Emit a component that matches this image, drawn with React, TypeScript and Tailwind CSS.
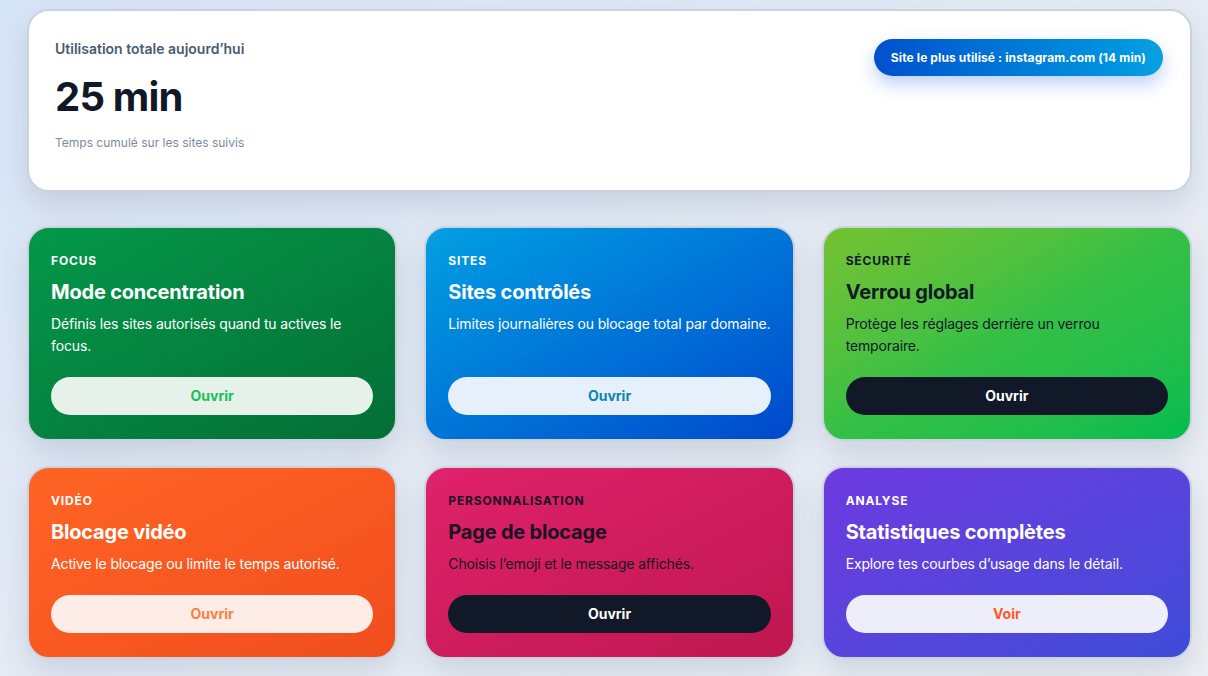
import React from "react";

type Card = {
  label: string;
  title: string;
  desc: string;
  btn: string;
  bg: string;
  text: string;
  btnCls: string;
};

const cards: Card[] = [
  {
    label: "FOCUS",
    title: "Mode concentration",
    desc: "Définis les sites autorisés quand tu actives le focus.",
    btn: "Ouvrir",
    bg: "bg-gradient-to-br from-[#04984a] to-[#046f35]",
    text: "text-white",
    btnCls: "bg-[#e5f1e9] text-[#14c058]",
  },
  {
    label: "SITES",
    title: "Sites contrôlés",
    desc: "Limites journalières ou blocage total par domaine.",
    btn: "Ouvrir",
    bg: "bg-gradient-to-br from-[#0a9fe2] to-[#0047cc]",
    text: "text-white",
    btnCls: "bg-[#e6f0fb] text-[#0b83b4]",
  },
  {
    label: "SÉCURITÉ",
    title: "Verrou global",
    desc: "Protège les réglages derrière un verrou temporaire.",
    btn: "Ouvrir",
    bg: "bg-gradient-to-br from-[#74c230] via-[#34c045] to-[#00bc4f]",
    text: "text-[#111827]",
    btnCls: "bg-[#111827] text-white",
  },
  {
    label: "VIDÉO",
    title: "Blocage vidéo",
    desc: "Active le blocage ou limite le temps autorisé.",
    btn: "Ouvrir",
    bg: "bg-gradient-to-br from-[#ff6424] to-[#f14d1e]",
    text: "text-white",
    btnCls: "bg-[#fdede6] text-[#ff7d40]",
  },
  {
    label: "PERSONNALISATION",
    title: "Page de blocage",
    desc: "Choisis l’emoji et le message affichés.",
    btn: "Ouvrir",
    bg: "bg-gradient-to-br from-[#e0226a] to-[#bf174f]",
    text: "text-[#1a1325]",
    btnCls: "bg-[#111827] text-white",
  },
  {
    label: "ANALYSE",
    title: "Statistiques complètes",
    desc: "Explore tes courbes d’usage dans le détail.",
    btn: "Voir",
    bg: "bg-gradient-to-br from-[#6e3ae0] to-[#3d4bd8]",
    text: "text-white",
    btnCls: "bg-[#eeeefa] text-[#ff5a24]",
  },
];

export default function App() {
  return (
    <div
      className="min-h-[676px] w-full bg-gradient-to-br from-[#d6e4f7] via-[#e6ecf5] to-[#eef0f4] pl-[27px] pr-[16px] pt-[9px] pb-6"
      style={{ fontFamily: "Inter, 'Noto Sans', sans-serif" }}
    >
      <div className="flex items-start justify-between rounded-[22px] border-2 border-[#c9d3df] bg-white pl-[26px] pr-[27px] pt-7 pb-[39px] shadow-[0_14px_30px_rgba(148,163,184,0.35)]">
        <div className="flex flex-col">
          <div className="text-sm font-semibold leading-5 text-[#4b5b72]">
            Utilisation totale aujourd’hui
          </div>
          <div className="mt-[18px] text-[40px] font-bold leading-[40px] tracking-[-0.02em] text-[#111827]">
            25 min
          </div>
          <div className="mt-[18px] text-xs leading-4 text-[#7b8aa0]">
            Temps cumulé sur les sites suivis
          </div>
        </div>
        <div className="rounded-full bg-gradient-to-r from-[#0050cc] to-[#0aa0e2] px-[17px] py-[10px] text-xs font-bold leading-[17px] tracking-[0.01em] text-white shadow-[0_8px_18px_rgba(37,99,235,0.3)]">
          Site le plus utilisé : instagram.com (14 min)
        </div>
      </div>

      <div className="mt-[34px] grid grid-cols-3 gap-x-[27px] gap-y-[25px]">
        {cards.map((c) => (
          <div
            key={c.label}
            className={`flex flex-col rounded-[22px] border-2 border-[#c9d3df] px-[22px] pt-[23px] pb-6 shadow-[0_14px_30px_rgba(148,163,184,0.35)] ${c.bg} ${c.text}`}
          >
            <div className="mt-[2px] text-xs font-bold leading-4 tracking-[0.07em]">
              {c.label}
            </div>
            <div className="mt-[9px] text-xl font-bold leading-7 tracking-[-0.01em]">
              {c.title}
            </div>
            <div className="mt-[7px] text-sm leading-[22px] tracking-[-0.01em]">
              {c.desc}
            </div>
            <div className="mt-auto pt-5">
              <button
                className={`h-[38px] w-full rounded-full text-sm font-bold ${c.btnCls}`}
              >
                {c.btn}
              </button>
            </div>
          </div>
        ))}
      </div>
    </div>
  );
}
